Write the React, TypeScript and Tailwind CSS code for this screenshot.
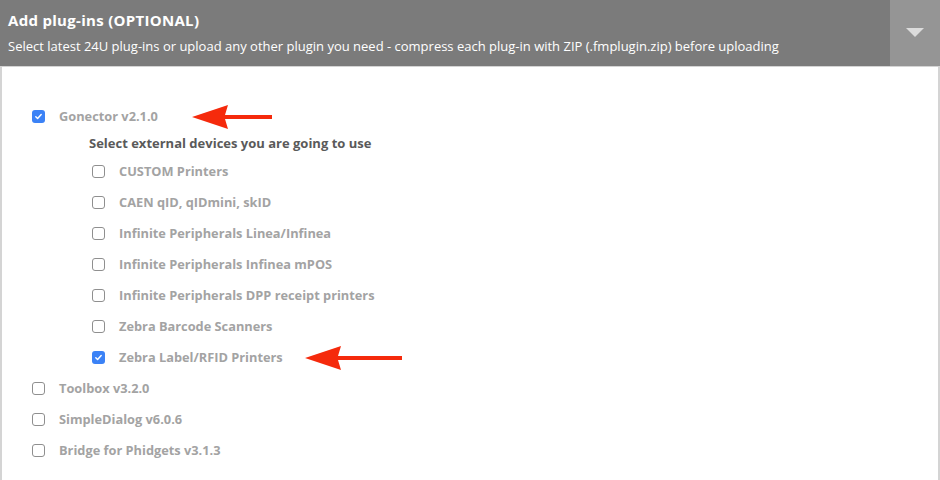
import React from 'react';

const font = { fontFamily: '"Open Sans", "Liberation Sans", sans-serif' };

const Check = ({ checked }: { checked?: boolean }) =>
  checked ? (
    <span className="flex h-[13px] w-[13px] shrink-0 items-center justify-center rounded-[3px] bg-[#3b82f6]">
      <svg width="9" height="9" viewBox="0 0 10 10" fill="none">
        <path d="M2 5.2l2 2.1L8 2.8" stroke="white" strokeWidth="1.6" strokeLinecap="round" strokeLinejoin="round" />
      </svg>
    </span>
  ) : (
    <span className="h-[13px] w-[13px] shrink-0 rounded-[3px] border border-[#8f8f8f] bg-white" />
  );

const Arrow = ({ width }: { width: number }) => (
  <svg width={width} height="24" viewBox={`0 0 ${width} 24`} className="absolute top-1/2 -translate-y-1/2">
    <polygon points={`0,12 36,0 33,10 ${width},10 ${width},14 33,14 36,24`} fill="#f52a0c" />
  </svg>
);

const Row = ({
  label,
  checked,
  arrowLeft,
  arrowWidth,
}: {
  label: string;
  checked?: boolean;
  arrowLeft?: string;
  arrowWidth?: number;
}) => (
  <div className="relative flex h-[31px] items-center gap-[14px]">
    <Check checked={checked} />
    <span className="text-[12.8px] font-bold text-[#a3a3a3]">{label}</span>
    {arrowWidth ? (
      <div className={`absolute top-0 h-full ${arrowLeft}`}>
        <Arrow width={arrowWidth} />
      </div>
    ) : null}
  </div>
);

const devices = [
  'CUSTOM Printers',
  'CAEN qID, qIDmini, skID',
  'Infinite Peripherals Linea/Infinea',
  'Infinite Peripherals Infinea mPOS',
  'Infinite Peripherals DPP receipt printers',
  'Zebra Barcode Scanners',
];

export default function App() {
  return (
    <div className="h-[480px] w-[940px] overflow-hidden bg-white" style={font}>
      {/* Header */}
      <div className="flex h-[66px] bg-[#7b7b7b] text-white">
        <div className="flex-1 pl-2 pt-[10px]">
          <div className="text-[15px] font-bold leading-5 tracking-[0.3px]">Add plug-ins (OPTIONAL)</div>
          <div className="mt-[8px] text-[13px] leading-4">
            Select latest 24U plug-ins or upload any other plugin you need - compress each plug-in with ZIP (.fmplugin.zip) before uploading
          </div>
        </div>
        <div className="flex w-[50px] items-center justify-center bg-[#959595]">
          <svg width="18" height="10" viewBox="0 0 18 10">
            <polygon points="0,0 18,0 9,9" fill="#dcdcdc" />
          </svg>
        </div>
      </div>

      {/* Body */}
      <div className="h-[414px] border-x-2 border-t border-[#d4d4d4] pl-[30px] pt-[34px]">
        <Row label="Gonector v2.1.0" checked arrowLeft="left-[160px]" arrowWidth={80} />
        <div className="pl-[57px]">
          <div className="flex h-[24px] items-center text-[13px] font-bold text-[#5a5a5a]">
            Select external devices you are going to use
          </div>
          <div className="pl-[3px]">
            {devices.map((d) => (
              <Row key={d} label={d} />
            ))}
            <Row label="Zebra Label/RFID Printers" checked arrowLeft="left-[213px]" arrowWidth={97} />
          </div>
        </div>
        <Row label="Toolbox v3.2.0" />
        <Row label="SimpleDialog v6.0.6" />
        <Row label="Bridge for Phidgets v3.1.3" />
      </div>
    </div>
  );
}
